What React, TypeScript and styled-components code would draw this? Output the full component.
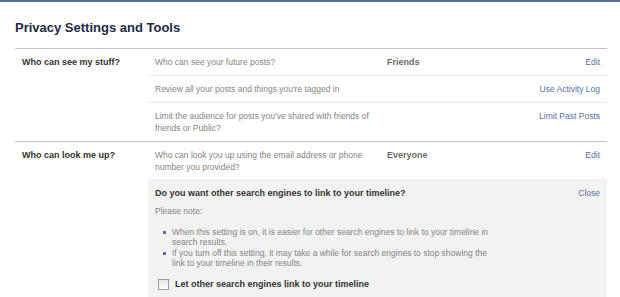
import React from "react";
import styled, { createGlobalStyle } from "styled-components";

const GlobalStyle = createGlobalStyle`
  body {
    margin: 0;
    background: #ffffff;
    font-family: "Liberation Sans", Arial, sans-serif;
  }
`;

const Page = styled.div`
  border-top: 2px solid #5b6e9c;
  padding: 0 13px 0 15px;
`;

const Title = styled.h2`
  margin: 0;
  padding: 17px 0 11px 0;
  font-size: 13px;
  line-height: 18px;
  font-weight: bold;
  color: #1c2a47;
`;

const Section = styled.div`
  display: grid;
  grid-template-columns: 133px 1fr;
  border-top: 1px solid #c2c2c2;
`;

const SectionLabel = styled.div`
  padding: 7px 0 0 7px;
  font-size: 9px;
  line-height: 12px;
  font-weight: bold;
  color: #333333;
`;

const Rows = styled.div`
  display: flex;
  flex-direction: column;
`;

const Row = styled.div<{ $bottom?: number }>`
  display: flex;
  align-items: flex-start;
  padding: 7px 7px ${(p) => p.$bottom ?? 7}px 7px;
  & + & {
    border-top: 1px solid #e9e9e9;
  }
`;

const Desc = styled.div`
  width: 220px;
  margin-right: 12px;
  font-size: 8.5px;
  line-height: 12px;
  color: #858585;
`;

const Value = styled.div`
  flex: 1;
  font-size: 9px;
  line-height: 12px;
  font-weight: bold;
  color: #6a6a6a;
`;

const Action = styled.a`
  font-size: 8.5px;
  line-height: 12px;
  color: #5570a8;
  text-decoration: none;
  cursor: pointer;
`;

const Panel = styled.div`
  background: #f2f2f2;
  padding: 8px 7px 12px 7px;
`;

const PanelHead = styled.div`
  display: flex;
  justify-content: space-between;
  align-items: center;
`;

const PanelTitle = styled.div`
  font-size: 9px;
  line-height: 12px;
  font-weight: bold;
  color: #333333;
`;

const Note = styled.div`
  margin-top: 6px;
  font-size: 8.5px;
  line-height: 12px;
  color: #858585;
`;

const List = styled.ul`
  list-style: none;
  margin: 10px 0 0 0;
  padding: 0 0 0 8px;
`;

const Item = styled.li`
  display: flex;
  margin-bottom: 1px;
  font-size: 8.5px;
  line-height: 10px;
  color: #858585;
  &::before {
    content: "";
    flex-shrink: 0;
    width: 3px;
    height: 3px;
    margin: 4px 6px 0 0;
    background: #5570a8;
  }
`;

const ItemText = styled.span`
  max-width: 318px;
`;

const CheckRow = styled.label`
  display: flex;
  align-items: center;
  gap: 6px;
  margin: 10px 0 0 3px;
  font-size: 9px;
  line-height: 12px;
  font-weight: bold;
  color: #333333;
`;

const Box = styled.span`
  width: 9px;
  height: 9px;
  border: 1px solid #9a9a9a;
  background: linear-gradient(#e6e6e6, #ffffff);
`;

export default function App() {
  return (
    <Page>
      <GlobalStyle />
      <Title>Privacy Settings and Tools</Title>

      <Section>
        <SectionLabel>Who can see my stuff?</SectionLabel>
        <Rows>
          <Row>
            <Desc>Who can see your future posts?</Desc>
            <Value>Friends</Value>
            <Action>Edit</Action>
          </Row>
          <Row>
            <Desc>Review all your posts and things you're tagged in</Desc>
            <Value />
            <Action>Use Activity Log</Action>
          </Row>
          <Row>
            <Desc>Limit the audience for posts you've shared with friends of friends or Public?</Desc>
            <Value />
            <Action>Limit Past Posts</Action>
          </Row>
        </Rows>
      </Section>

      <Section>
        <SectionLabel>Who can look me up?</SectionLabel>
        <Rows>
          <Row $bottom={6}>
            <Desc>Who can look you up using the email address or phone number you provided?</Desc>
            <Value>Everyone</Value>
            <Action>Edit</Action>
          </Row>
          <Panel>
            <PanelHead>
              <PanelTitle>Do you want other search engines to link to your timeline?</PanelTitle>
              <Action>Close</Action>
            </PanelHead>
            <Note>Please note:</Note>
            <List>
              <Item>
                <ItemText>When this setting is on, it is easier for other search engines to link to your timeline in search results.</ItemText>
              </Item>
              <Item>
                <ItemText>If you turn off this setting, it may take a while for search engines to stop showing the link to your timeline in their results.</ItemText>
              </Item>
            </List>
            <CheckRow>
              <Box />
              Let other search engines link to your timeline
            </CheckRow>
          </Panel>
        </Rows>
      </Section>
    </Page>
  );
}
